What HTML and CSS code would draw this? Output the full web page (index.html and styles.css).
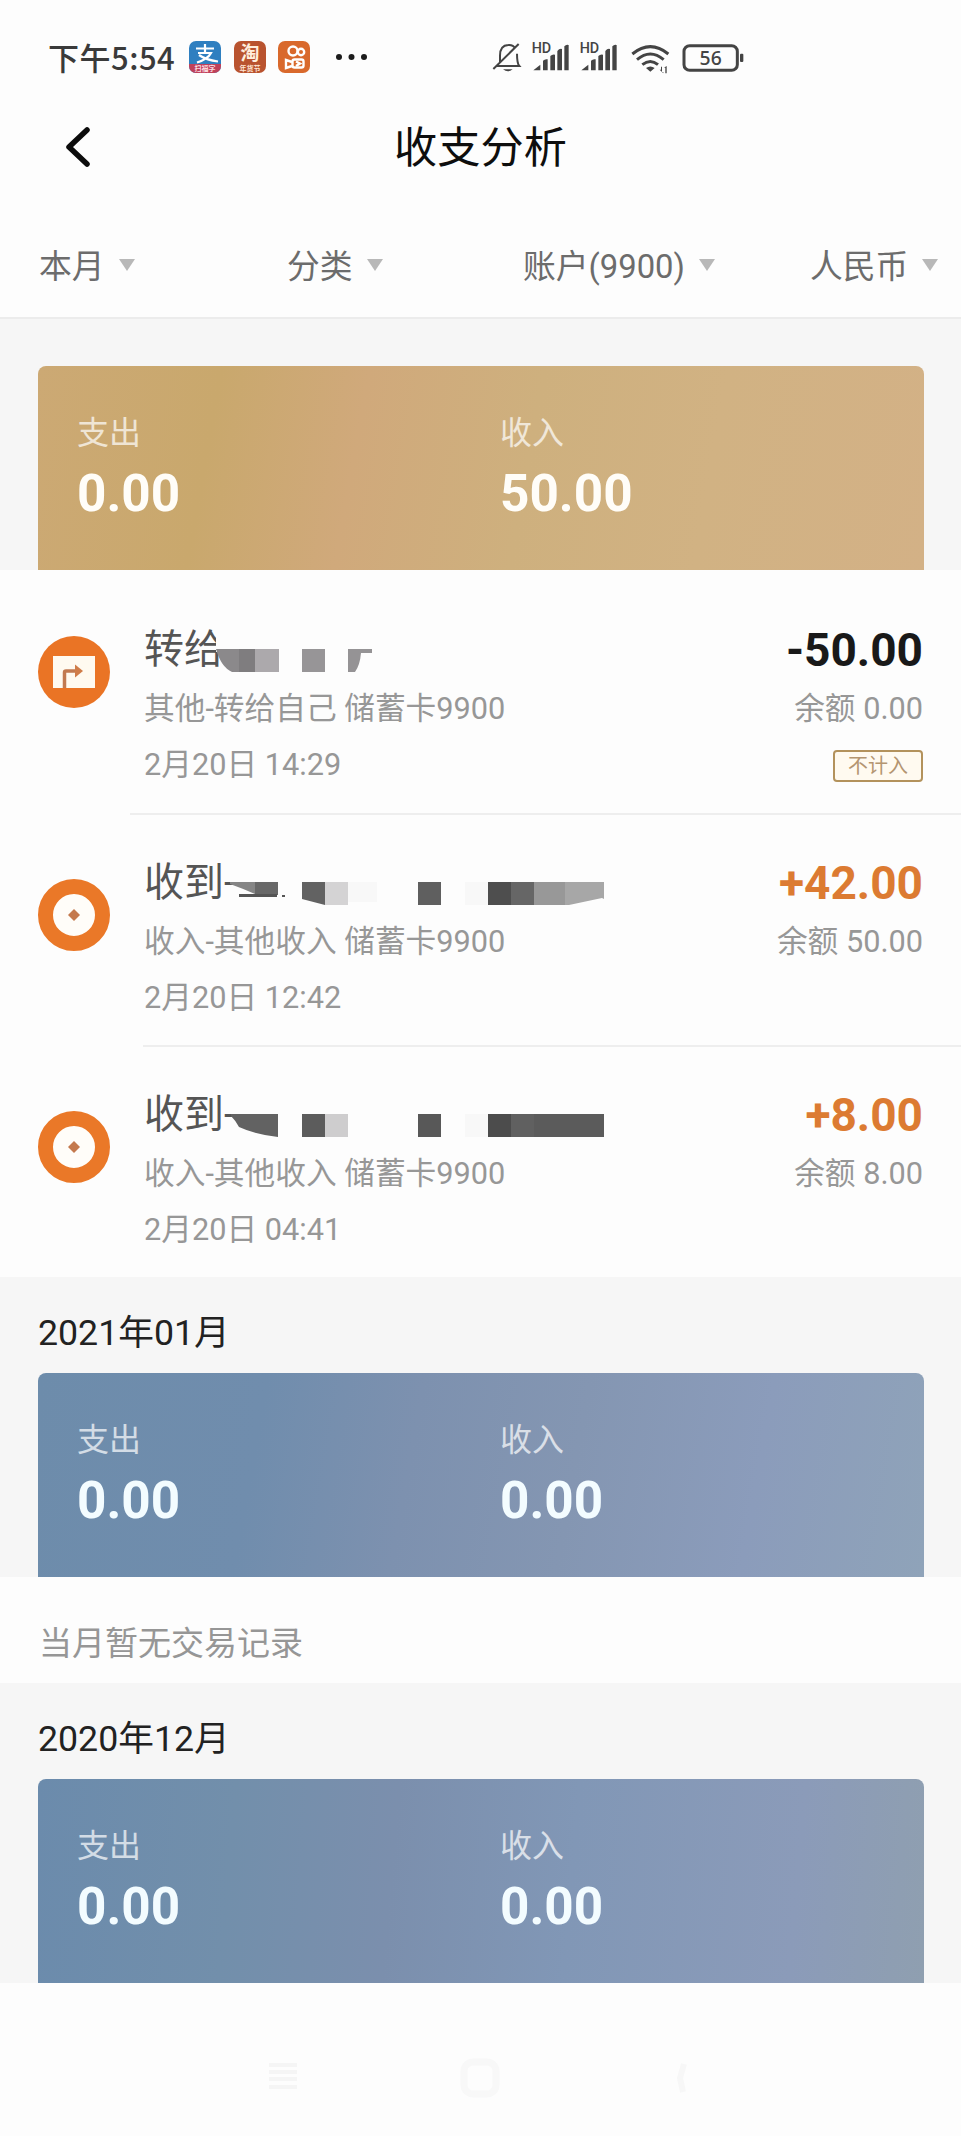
FILE: index.html
```html
<!DOCTYPE html>
<html lang="zh-CN">
<head>
<meta charset="utf-8">
<title>收支分析</title>
<link rel="stylesheet" href="styles.css">
</head>
<body>
<header class="top">
  <div class="status">
    <span class="clock">下午5:54</span>
    <div class="apps">
      <svg width="32" height="32" viewBox="0 0 32 32"><defs><clipPath id="r"><rect width="32" height="32" rx="7"/></clipPath></defs><g clip-path="url(#r)"><rect width="32" height="32" fill="#2f7fc0"/><rect y="23" width="32" height="9" fill="#c0415a"/></g><path d="M7 7.500H25M16 3V12M9 12H22Q19 18 8 21.500M10 14Q17 19 29 20.500" fill="none" stroke="#fff" stroke-width="2.200"/><text x="16" y="29.500" class="app-s">扫福字</text></svg>
      <svg width="32" height="32" viewBox="0 0 32 32"><rect width="32" height="32" rx="7" fill="#b9532f"/><text x="16" y="19" class="app-l">淘</text><text x="16" y="29.500" class="app-s app-m">年货节</text></svg>
      <svg width="32" height="32" viewBox="0 0 32 32"><rect width="32" height="32" rx="7" fill="#d9692c"/><g fill="none" stroke="#fff" stroke-width="2.400"><circle cx="15" cy="10" r="4.500"/><circle cx="23" cy="11" r="3.200"/><rect x="14.500" y="18.500" width="11" height="8" rx="2"/><path d="M14 21L8 19V27L14 25M18 20.500L22 22.500L18 25"/></g></svg>
    </div>
    <svg class="dots" width="32" height="8" viewBox="0 0 32 8"><g fill="#1c1c1c"><circle cx="4" cy="4" r="3"/><circle cx="16.500" cy="4" r="3"/><circle cx="29" cy="4" r="3"/></g></svg>
    <svg class="signals" width="256" height="36" viewBox="70 60 768 108">
      <g fill="none" stroke="#444" stroke-width="6"><path d="M85 135H152Q145 127 145 98M94 124V104Q94 73 119 72Q134 71 139 82M74 144L150 69"/></g><path d="M103 145H132Q118 157 103 145Z" fill="#444"/>
      <g fill="#444"><path id="bars" d="M194 148L215 131V148ZM223 148V119Q229 113 237 115V148ZM245 148V105Q251 99 259 101V148ZM266 148V90Q272 82 280 84V148ZM287 148V76Q293 69 300 72V148Z"/><use href="#bars" x="144"/>
      <text x="189" y="97" class="hd">HD</text><text x="333" y="97" class="hd">HD</text></g>
      <g fill="none" stroke="#444" stroke-width="9"><path d="M491 99Q545 55 599 99M505 116Q545 82 585 116M521 131Q545 112 568 131"/></g>
      <path d="M532 141Q545 132 558 141L545 152ZM577 137H580V153H584V157L573 146H577ZM590 157V140H586L594 135V157Z" fill="#444"/>
      <rect x="646" y="74" width="160" height="74" rx="17" fill="none" stroke="#444" stroke-width="9"/><rect x="814" y="98" width="10" height="25" rx="3" fill="#444"/><text x="726" y="133" class="battery">56</text>
    </svg>
  </div>
  <div class="titlebar">
    <svg class="back" width="30" height="42" viewBox="0 0 30 42"><path d="M24 4L6 21L24 38" fill="none" stroke="#0c0c0c" stroke-width="5.500" stroke-linecap="round" stroke-linejoin="round"/></svg>
    <h1 class="title">收支分析</h1>
  </div>
  <nav class="filters">
    <span class="filter">本月<i class="caret"></i></span>
    <span class="filter">分类<i class="caret"></i></span>
    <span class="filter">账户(9900)<i class="caret"></i></span>
    <span class="filter">人民币<i class="caret"></i></span>
  </nav>
</header>

<section class="month current">
  <div class="card gold">
    <div class="sum"><span class="label">支出</span><span class="value">0.00</span></div>
    <div class="sum"><span class="label">收入</span><span class="value">50.00</span></div>
  </div>
</section>

<main class="list">
  <article class="row first">
    <svg class="icon" width="74" height="74" viewBox="0 0 74 74"><circle cx="37" cy="37" r="36" fill="#ea7425"/><rect x="16" y="21" width="42" height="32" fill="#fffaf0"/><path d="M27.500 53V37.500Q27.500 36 29 36H43" fill="none" stroke="#c27a50" stroke-width="3.500"/><path d="M38 29.500L46 36L38 42.500Z" fill="#d07c48"/></svg>
    <div class="info">
      <h2 class="name">转给
        <svg class="mosaic" width="240" height="46" viewBox="0 0 240 46"><path d="M71 0H94V46H76V23H71Z" fill="#fdfdfd"/><path d="M71 20H110V43H87Q76 38 71 20Z" fill="#8b898b"/><path d="M94 20H110V43H94Z" fill="#7f7d7f"/><path d="M110 20H134V43H110Z" fill="#aca9ac"/><path d="M157 20H180V43H157Z" fill="#979597"/><path d="M203 20H227V24H216Q215 36 210 43H203Z" fill="#959395"/></svg>
      </h2>
      <p class="meta">其他-转给自己 储蓄卡9900</p>
      <p class="meta">2月20日 14:29</p>
    </div>
    <div class="amounts"><strong class="amount">-50.00</strong><span class="meta">余额 0.00</span><span class="badge">不计入</span></div>
  </article>
  <article class="row">
    <svg class="icon" width="74" height="74" viewBox="0 0 74 74"><circle cx="37" cy="37" r="28.500" fill="#fffdf9" stroke="#ea7828" stroke-width="15"/><path d="M37 31L43 37L37 43L31 37Z" fill="#c4794d"/></svg>
    <div class="info">
      <h2 class="name">收到-
        <svg class="mosaic" width="480" height="46" viewBox="0 0 480 46"><path d="M85 20H110V32Q99 27 85 22Z" fill="#858585"/><path d="M110 20H133V33H110Z" fill="#686868"/><path d="M94 32H132V35H94ZM137 33H140V35H137Z" fill="#555"/><path d="M157 20H180V43L157 37Z" fill="#626262"/><path d="M180 20H203V43H180Z" fill="#d4d3d4"/><path d="M203 20H232V40H203ZM320 20H343V43H320Z" fill="#f8f8f8"/><path d="M273 20H296V43H273Z" fill="#5f5f5f"/><path d="M343 20H366V43H343Z" fill="#4e4e4e"/><path d="M366 20H389V43H366Z" fill="#666"/><path d="M389 20H420V43H389Z" fill="#989898"/><path d="M420 20H459V37L457 36L424 43H420Z" fill="#a7a7a7"/></svg>
      </h2>
      <p class="meta">收入-其他收入 储蓄卡9900</p>
      <p class="meta">2月20日 12:42</p>
    </div>
    <div class="amounts"><strong class="amount in">+42.00</strong><span class="meta">余额 50.00</span></div>
  </article>
  <article class="row last">
    <svg class="icon" width="74" height="74" viewBox="0 0 74 74"><circle cx="37" cy="37" r="28.500" fill="#fffdf9" stroke="#ea7828" stroke-width="15"/><path d="M37 31L43 37L37 43L31 37Z" fill="#c4794d"/></svg>
    <div class="info">
      <h2 class="name">收到-
        <svg class="mosaic" width="480" height="46" viewBox="0 0 480 46"><path d="M86 20H133V43Q109 40 94 33Q91 27 86 22Z" fill="#626262"/><path d="M157 20H180V43H157Z" fill="#5c5c5c"/><path d="M180 20H203V43H180Z" fill="#cecdce"/><path d="M320 20H343V43H320Z" fill="#f8f8f8"/><path d="M273 20H296V43H273Z" fill="#585858"/><path d="M343 20H366V43H343Z" fill="#4c4c4c"/><path d="M366 20H389V43H366Z" fill="#606060"/><path d="M389 20H459V43H389Z" fill="#5b5b5b"/></svg>
      </h2>
      <p class="meta">收入-其他收入 储蓄卡9900</p>
      <p class="meta">2月20日 04:41</p>
    </div>
    <div class="amounts"><strong class="amount in">+8.00</strong><span class="meta">余额 8.00</span></div>
  </article>
</main>

<section class="month">
  <h3 class="month-name">2021年01月</h3>
  <div class="card blue">
    <div class="sum"><span class="label">支出</span><span class="value">0.00</span></div>
    <div class="sum"><span class="label">收入</span><span class="value">0.00</span></div>
  </div>
</section>
<p class="empty">当月暂无交易记录</p>
<section class="month">
  <h3 class="month-name">2020年12月</h3>
  <div class="card blue alt">
    <div class="sum"><span class="label">支出</span><span class="value">0.00</span></div>
    <div class="sum"><span class="label">收入</span><span class="value">0.00</span></div>
  </div>
</section>
<footer class="navbar">
  <svg width="28" height="32" viewBox="0 0 28 32"><path d="M0 3H28M0 10H28M0 17H28M0 25H28" stroke="#f5f5f5" stroke-width="4"/></svg>
  <svg width="42" height="42" viewBox="0 0 42 42"><rect x="5" y="5" width="32" height="32" rx="9" fill="none" stroke="#f8f8f8" stroke-width="7"/></svg>
  <svg width="20" height="34" viewBox="0 0 20 34"><path d="M13 3L9 17L12 31" fill="none" stroke="#f7f7f7" stroke-width="6"/></svg>
</footer>
</body>
</html>
```

FILE: styles.css
```css
* { box-sizing: border-box; margin: 0; padding: 0; }
body {
  width: 961px;
  height: 2136px;
  overflow: hidden;
  background: #fdfdfd;
  color: #222;
  font-family: Roboto, "Noto Sans CJK SC", sans-serif;
}
svg { display: block; flex: none; }

.top { height: 319px; border-bottom: 2px solid #ececec; }
.status { display: flex; align-items: center; height: 114px; padding-left: 48px; }
.clock { width: 141px; font: 500 31px/40px "Noto Sans CJK SC", sans-serif; color: #3a3a3a; letter-spacing: 0.5px; white-space: nowrap; }
.apps { display: flex; gap: 12.500px; }
.dots { margin-left: 25px; }
.signals { margin: 3px 0 0 125px; }
.app-s { font: 700 7px "Noto Sans CJK SC", sans-serif; fill: #fbdde0; text-anchor: middle; }
.app-m { fill: #ffe6d6; }
.app-l { font: 700 19px "Noto Sans CJK SC", sans-serif; fill: #ffeedd; text-anchor: middle; }
.hd { font: 500 43px Roboto, sans-serif; }
.battery { font: 500 58px "Noto Sans", sans-serif; fill: #444; text-anchor: middle; }

.titlebar { display: grid; grid-template-columns: 100px 1fr 100px; align-items: center; height: 66px; }
.back { margin: -1px 0 0 63px; }
.title { padding-top: 3px; font-weight: 400; font-size: 43.200px; line-height: 60px; text-align: center; color: #0e0e0e; }

.filters { display: grid; grid-template-columns: 248px 236px 287px 1fr; padding: 67px 0 0 39px; }
.filter { display: flex; align-items: center; gap: 14px; font-size: 32.800px; line-height: 40px; color: #6c6c6c; white-space: nowrap; }
.caret { border: 8px solid transparent; border-top: 12px solid #b8b8b8; border-bottom: 0; margin-top: -4px; }

.month { padding: 0 37px 0 38px; background: #f6f6f6; }
.current { padding-top: 47px; }
.month-name { height: 96px; padding-top: 34px; font-weight: 400; font-size: 35.700px; line-height: 44px; color: #222; }
.card { display: grid; grid-template-columns: 423px 1fr; height: 204px; padding: 46px 39px 0; border-radius: 8px 8px 0 0; }
.gold { background: linear-gradient(100deg, #cca974 0%, #c9a86d 20%, #d0a97b 36%, #ceb07e 55%, #d1b283 75%, #d3b186 100%); }
.blue { background: linear-gradient(100deg, #6d8cab 0%, #708dad 25%, #7d91af 42%, #8496b2 60%, #8b9cbb 80%, #8fa3b9 100%); }
.alt { background: linear-gradient(95deg, #6b8bac 0%, #728fab 22%, #7b8fad 40%, #8197b6 60%, #8b9bb9 85%, #8f9fb0 100%); }
.sum { display: flex; flex-direction: column; }
.label { font-size: 32px; line-height: 42px; color: #fff; opacity: .7; font-weight: 400; }
.value { margin-top: 10px; font-size: 51.300px; line-height: 60px; font-weight: 700; color: #fffdf8; }
.blue .value { color: #f3fcff; }

.row { display: grid; grid-template-columns: 107px 1fr auto; height: 232px; padding: 43px 38px 0 37px; background: linear-gradient(#eee, #eee) 143px 100% / 100% 2px no-repeat; }
.first { height: 245px; padding-top: 55px; background-position: 130px 100%; }
.last { height: 230px; background: none; }
.icon { margin-top: 20px; }
.first .icon { margin-top: 10px; }
.info, .amounts { display: flex; flex-direction: column; }
.name { position: relative; padding-top: 2px; font-weight: 400; font-size: 40px; line-height: 46px; color: #555; margin-bottom: 16px; white-space: nowrap; }
.mosaic { position: absolute; left: 1px; top: 4px; }
.meta { font-size: 30.700px; line-height: 40px; color: #979797; margin-bottom: 16px; white-space: nowrap; font-weight: 400; }
.amounts { align-items: flex-end; }
.amount { font-size: 46px; line-height: 50px; font-weight: 700; color: #191919; margin-bottom: 14px; }
.in { color: #dc7b32; }
.badge { width: 90px; height: 32px; margin-top: 5px; border: 2px solid #b3925c; border-radius: 4px; background: #fffaf0; color: #b49570; font-size: 20px; line-height: 28px; text-align: center; }

.empty { height: 106px; padding: 45px 39px 0; font-size: 33px; line-height: 44px; color: #969696; }
.navbar { display: flex; align-items: center; height: 153px; padding: 37px 0 0 269px; }
.navbar svg:nth-child(2) { margin-left: 162px; }
.navbar svg:nth-child(3) { margin-left: 170px; }
```
